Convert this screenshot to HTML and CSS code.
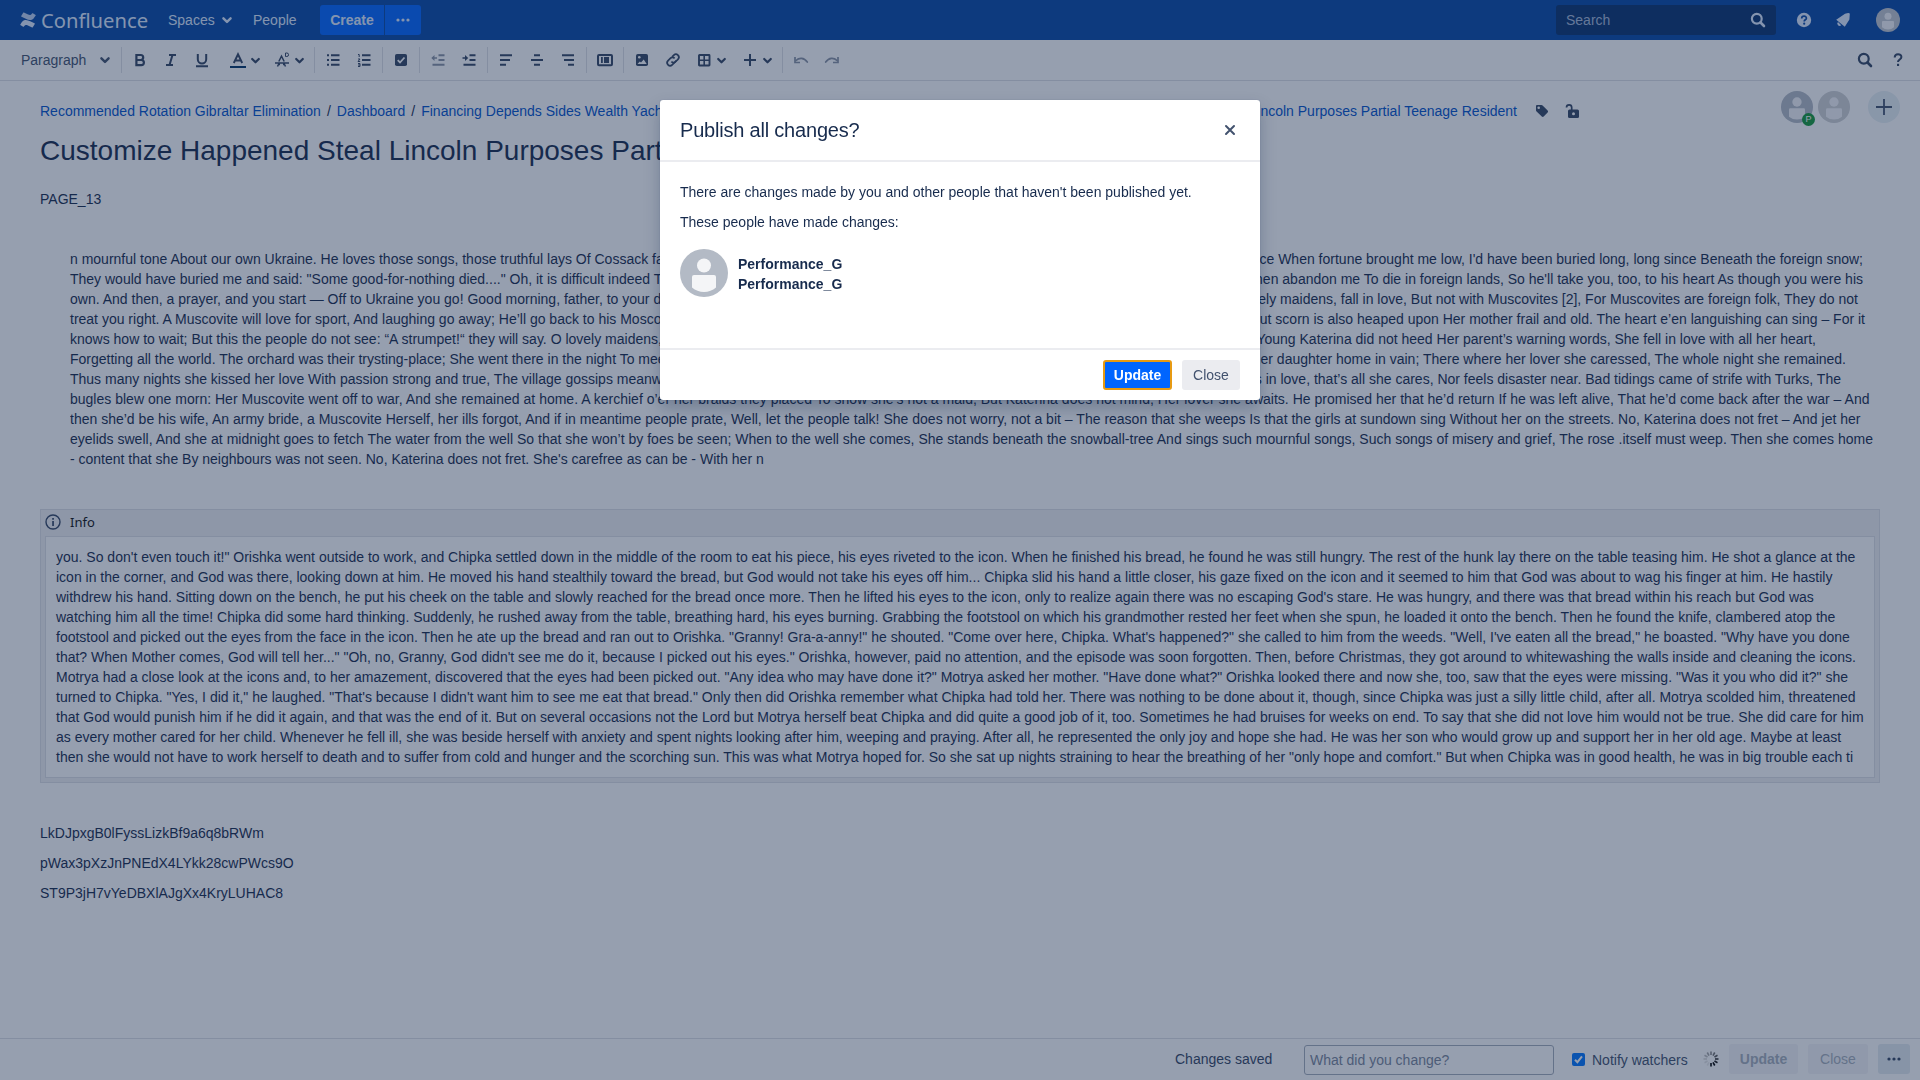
FILE: index.html
```html
<!DOCTYPE html>
<html lang="en">
<head>
<meta charset="utf-8">
<title>Confluence</title>
<link rel="stylesheet" href="styles.css">
</head>
<body>
<svg class="defs" width="0" height="0">
  <symbol id="chev" viewBox="0 0 10 10"><path d="M2 3.6 5 6.6 8 3.6" fill="none" stroke="currentColor" stroke-width="2" stroke-linecap="round" stroke-linejoin="round"/></symbol>
  <symbol id="search" viewBox="0 0 16 16"><circle cx="6.8" cy="6.8" r="4.9" fill="none" stroke="currentColor" stroke-width="2.2"/><path d="M10.5 10.5 14 14" stroke="currentColor" stroke-width="2.6" stroke-linecap="round"/></symbol>
  <symbol id="person" viewBox="0 0 48 48"><circle cx="24" cy="16.5" r="7"/><path d="M12 28a2 2 0 0 1 2-2h20a2 2 0 0 1 2 2v10.5a18.500 18.500 0 0 1-24 0z"/></symbol>
  <symbol id="dots" viewBox="0 0 16 16"><circle cx="3" cy="8" r="1.6"/><circle cx="8" cy="8" r="1.6"/><circle cx="13" cy="8" r="1.6"/></symbol>
</svg>
<div class="page">
  <header class="header">
    <a class="logo">
      <svg width="16" height="16" viewBox="0 0 16 16" fill="#deebff"><path d="M.5 12.200c.5-.8 1.200-1.900 1.900-2.700C4.800 7 7.600 7.900 10.200 9.200l4.300 2c.3.1.4.4.3.7l-2 3.300c-.1.3-.4.4-.7.300l-4.200-2c-2-.9-2.900-.5-3.900 1-.2.3-.5.4-.8.200L.3 13c-.2-.2-.100-.5.2-.8z"/><path d="M15.500 3.800c-.5.8-1.200 1.900-1.900 2.700C11.200 9 8.400 8.100 5.800 6.800l-4.300-2c-.3-.1-.4-.4-.3-.7L3.200.8c.1-.3.4-.4.7-.3l4.200 2c2 .9 2.900.5 3.900-1 .2-.3.5-.4.8-.2L15.700 3c.2.2.100.5-.2.800z" opacity=".85"/></svg>
      <span class="logo-name">Confluence</span>
    </a>
    <a class="nav spaces">Spaces <svg width="12" height="12"><use href="#chev"/></svg></a>
    <a class="nav people">People</a>
    <div class="create"><b>Create</b><span><svg width="16" height="16" fill="currentColor"><use href="#dots"/></svg></span></div>
    <div class="searchbox"><span>Search</span><svg width="16" height="16"><use href="#search"/></svg></div>
    <div class="header-icons">
      <svg width="16" height="16" viewBox="0 0 16 16"><circle cx="8" cy="8" r="7.200" fill="#deebff"/><path d="M5.700 6.400c0-3 4.700-3 4.700-.2 0 1.600-2.200 1.600-2.200 3.200" fill="none" stroke="#0747a6" stroke-width="1.700"/><circle cx="8.200" cy="11.700" r="1.100" fill="#0747a6"/></svg>
      <svg width="16" height="16" viewBox="0 0 16 16" fill="#deebff"><path d="M1.200 7.700 10 1.700Q14.900.2 14.800 2L14.400 7.500 9.800 14.800zM3 10l3.200 3.200A2.200 2.200 0 0 1 3 10z"/></svg>
      <span class="avatar small"><svg width="24" height="24"><use href="#person"/></svg></span>
    </div>
  </header>

  <div class="toolbar">
    <div class="style">Paragraph <svg width="12" height="12"><use href="#chev"/></svg></div>
    <div class="group">
      <i><svg viewBox="0 0 18 18"><path d="M5.400 4h4.300a2.400 2.400 0 0 1 0 5H5.400zM5.400 9h4.900a2.500 2.500 0 0 1 0 5.200H5.400z" fill="none" stroke="currentColor" stroke-width="2.200"/></svg></i>
      <i><svg viewBox="0 0 18 18"><path d="M7 4h7M4 14h7M10.500 4 7.500 14" fill="none" stroke="currentColor" stroke-width="2"/></svg></i>
      <i><svg viewBox="0 0 18 18"><path d="M4.800 3v5.300a4.200 4.200 0 0 0 8.400 0V3M3 15.200h12" fill="none" stroke="currentColor" stroke-width="2"/></svg></i>
      <i class="combo color"><svg viewBox="0 0 18 18"><path d="M4.800 12 9 3.300 13.200 12M6 9.500h6" fill="none" stroke="currentColor" stroke-width="1.900"/><path d="M1 15h16v2H1z" fill="#003366"/></svg><svg class="chev"><use href="#chev"/></svg></i>
      <i class="combo"><svg viewBox="0 0 18 18"><path d="M5.800 10.500 8.500 5.200l2.700 5.300M4.500 15.500l1-2h1.500M12.500 15.500l-1-2H10M2 12h14" fill="none" stroke="currentColor" stroke-width="1.500"/><path d="M12.500 2h1.300a1.700 1.700 0 0 1 0 3.500h-1.300z" fill="none" stroke="currentColor"/></svg><svg class="chev"><use href="#chev"/></svg></i>
    </div>
    <div class="group">
      <i><svg viewBox="0 0 18 18"><path d="M7 4.300h8.500M7 9h8.500M7 13.700h8.500" stroke="currentColor" stroke-width="2"/><path d="M3 4.300h2M3 9h2M3 13.700h2" stroke="currentColor" stroke-width="2"/></svg></i>
      <i><svg viewBox="0 0 18 18"><path d="M7 4.300h8.500M7 9h8.500M7 13.700h8.500" stroke="currentColor" stroke-width="2"/><path d="M3 3.500h1.200V6M3 8h2L3 10.500h2.200M3 12.500h2v3H3M3 14h2" fill="none" stroke="currentColor"/></svg></i>
    </div>
    <div class="group">
      <i><svg viewBox="0 0 18 18"><rect x="3" y="3" width="12" height="12" rx="1.800" fill="currentColor"/><path d="m5.700 9.200 2.300 2.300 4.500-5" fill="none" stroke="#fff" stroke-width="1.800"/></svg></i>
    </div>
    <div class="group">
      <i class="dim"><svg viewBox="0 0 18 18"><path d="M9.500 4.300h6M9.500 9h6M3.500 13.700h12" stroke="currentColor" stroke-width="2"/><path d="M3.500 7H8" stroke="currentColor" stroke-width="1.500"/><path d="M5.500 4v6L2.300 7z" fill="currentColor"/></svg></i>
      <i><svg viewBox="0 0 18 18"><path d="M9.500 4.300h6M9.500 9h6M3.500 13.700h12" stroke="currentColor" stroke-width="2"/><path d="M2.500 7H7" stroke="currentColor" stroke-width="1.500"/><path d="M5 4v6l3.200-3z" fill="currentColor"/></svg></i>
    </div>
    <div class="group">
      <i><svg viewBox="0 0 18 18"><path d="M3 4.300h12M3 9h10M3 13.700h6" stroke="currentColor" stroke-width="2"/></svg></i>
      <i><svg viewBox="0 0 18 18"><path d="M6 4.300h6M3 9h12M6 13.700h6" stroke="currentColor" stroke-width="2"/></svg></i>
      <i><svg viewBox="0 0 18 18"><path d="M3 4.300h12M5 9h10M9 13.700h6" stroke="currentColor" stroke-width="2"/></svg></i>
    </div>
    <div class="group">
      <i><svg viewBox="0 0 18 18"><rect x="2" y="4" width="14" height="10.200" rx="1" fill="none" stroke="currentColor" stroke-width="2"/><path d="M5 6h1.800v6H5zM8 6h5v6H8z" fill="currentColor"/></svg></i>
    </div>
    <div class="group">
      <i><svg viewBox="0 0 18 18"><rect x="3" y="3" width="12" height="12" rx="1.800" fill="currentColor"/><circle cx="6.300" cy="6.300" r="1.300" fill="#fff"/><path d="m4.500 13 2.300-2.500L8 11.500l2.700-3 3 4.500z" fill="#fff"/></svg></i>
      <i><svg viewBox="0 0 18 18"><g fill="none" stroke="currentColor" stroke-width="1.700" transform="rotate(-45 9 9)"><path d="M11 11.800H5a2.900 2.900 0 0 1 0-5.800h3.500a2.900 2.900 0 0 1 2.800 3"/><path d="M9.500 12H13a2.900 2.900 0 0 0 0-5.800h-2.500M6.700 9a2.900 2.900 0 0 0 2.800 3"/></g></svg></i>
      <i class="combo"><svg viewBox="0 0 18 18"><rect x="4" y="4" width="10.500" height="10.500" rx=".5" fill="none" stroke="currentColor" stroke-width="1.900"/><path d="M9.200 4v10M4 9.200h10" stroke="currentColor" stroke-width="1.600"/></svg><svg class="chev"><use href="#chev"/></svg></i>
      <i class="combo"><svg viewBox="0 0 18 18"><path d="M9 3v12M3 9h12" stroke="currentColor" stroke-width="2"/></svg><svg class="chev"><use href="#chev"/></svg></i>
    </div>
    <div class="group">
      <i class="dim"><svg viewBox="0 0 18 18"><path d="M4 9.500c3-3 8-3.300 11.300 1.500" fill="none" stroke="currentColor" stroke-width="1.700" stroke-linecap="round"/><path d="M3 6v5.500h5" fill="none" stroke="currentColor" stroke-width="1.700"/></svg></i>
      <i class="dim"><svg viewBox="0 0 18 18"><path d="M14 9.500c-3-3-8-3.300-11.300 1.500" fill="none" stroke="currentColor" stroke-width="1.700" stroke-linecap="round"/><path d="M15 6v5.500h-5" fill="none" stroke="currentColor" stroke-width="1.700"/></svg></i>
    </div>
    <div class="toolbar-end">
      <svg width="16" height="16"><use href="#search"/></svg>
      <svg width="12" height="16" viewBox="0 0 12 16"><path d="M2.700 5.500C2.700 1.200 9.400 1.300 9.400 5c0 2.500-3.400 2.400-3.400 5" fill="none" stroke="currentColor" stroke-width="2"/><rect x="5" y="11.800" width="2.100" height="2.200" fill="currentColor"/></svg>
    </div>
  </div>

  <main class="content">
    <div class="top">
      <div class="crumbs">
        <span class="crumb-left"><a>Recommended Rotation Gibraltar Elimination</a><em>/</em><a>Dashboard</a><em>/</em><a>Financing Depends Sides Wealth Yachts</a></span>
        <a>Steal Lincoln Purposes Partial Teenage Resident</a>
      </div>
      <div class="crumb-icons">
        <svg width="16" height="16" viewBox="0 0 16 16"><path d="M2 3.200C2 2.400 2.500 2 3.200 2h4.200c.5 0 .9.200 1.200.500l5 5c.6.600.6 1.300 0 1.900l-3.900 4.100c-.6.600-1.300.600-1.900 0L2.600 8.500C2.200 8.100 2 7.700 2 7.200z" fill="currentColor"/><circle cx="4.700" cy="4.700" r="1.300" fill="#fff"/></svg>
        <svg width="16" height="16" viewBox="0 0 16 16"><rect x="4" y="6.500" width="11" height="8.500" rx="1.500" fill="currentColor"/><path d="M2.500 4.500c0-3.500 5.200-3.500 5.200 0v3" fill="none" stroke="currentColor" stroke-width="1.700"/><circle cx="9.500" cy="10.700" r="1.500" fill="#fff"/></svg>
      </div>
      <div class="people-row">
        <span class="avatar"><svg width="32" height="32"><use href="#person"/></svg><span class="badge">P</span></span>
        <span class="avatar gray"><svg width="32" height="32"><use href="#person"/></svg></span>
        <span class="invite"><svg width="16" height="16" viewBox="0 0 16 16"><path d="M8 0v16M0 8h16" stroke="#42526e" stroke-width="1.800"/></svg></span>
      </div>
    </div>
    <h1>Customize Happened Steal Lincoln Purposes Partial Teenage Resident</h1>
    <p class="tag">PAGE_13</p>
    <div class="story">
      <div style="width:1793px"><span>n mournful tone About our own Ukraine. He loves those songs, those truthful lays Of Cossack fame</span><span>since When fortune brought me low, I'd have been buried long, long since Beneath the foreign snow;</span></div>
      <div style="width:1793px"><span>They would have buried me and said: "Some good-for-nothing died...." Oh, it is difficult indeed To</span><span>then abandon me To die in foreign lands, So he'll take you, too, to his heart As though you were his</span></div>
      <div style="width:1788px"><span>own. And then, a prayer, and you start — Off to Ukraine you go! Good morning, father, to your door</span><span>lovely maidens, fall in love, But not with Muscovites [2], For Muscovites are foreign folk, They do not</span></div>
      <div style="width:1795px"><span>treat you right. A Muscovite will love for sport, And laughing go away; He’ll go back to his Moscow</span><span>But scorn is also heaped upon Her mother frail and old. The heart e’en languishing can sing – For it</span></div>
      <div style="width:1746px"><span>knows how to wait; But this the people do not see: “A strumpet!“ they will say. O lovely maidens,</span><span>Young Katerina did not heed Her parent’s warning words, She fell in love with all her heart,</span></div>
      <div style="width:1776px"><span>Forgetting all the world. The orchard was their trysting-place; She went there in the night To meet</span><span>her daughter home in vain; There where her lover she caressed, The whole night she remained.</span></div>
      <div style="width:1771px"><span>Thus many nights she kissed her love With passion strong and true, The village gossips meanwhile</span><span>is in love, that’s all she cares, Nor feels disaster near. Bad tidings came of strife with Turks, The</span></div>
      <p style="width:1799.500px">bugles blew one morn: Her Muscovite went off to war, And she remained at home. A kerchief o’er her braids they placed To show she’s not a maid, But Katerina does not mind, Her lover she awaits. He promised her that he’d return If he was left alive, That he’d come back after the war – And</p>
      <p style="width:1790.500px">then she’d be his wife, An army bride, a Muscovite Herself, her ills forgot, And if in meantime people prate, Well, let the people talk! She does not worry, not a bit – The reason that she weeps Is that the girls at sundown sing Without her on the streets. No, Katerina does not fret – And jet her</p>
      <p style="width:1803px">eyelids swell, And she at midnight goes to fetch The water from the well So that she won’t by foes be seen; When to the well she comes, She stands beneath the snowball-tree And sings such mournful songs, Such songs of misery and grief, The rose .itself must weep. Then she comes home</p>
      <div>- content that she By neighbours was not seen. No, Katerina does not fret. She's carefree as can be - With her n</div>
    </div>
    <section class="info">
      <div class="info-title"><svg width="16" height="16" viewBox="0 0 16 16"><circle cx="8" cy="8" r="7" fill="none" stroke="#344563" stroke-width="1.400"/><path d="M7.200 7h1.700v5H7.200zM7.200 4h1.700v1.700H7.200z" fill="#344563"/></svg>Info</div>
      <div class="info-body">
        <div>you. So don't even touch it!" Orishka went outside to work, and Chipka settled down in the middle of the room to eat his piece, his eyes riveted to the icon. When he finished his bread, he found he was still hungry. The rest of the hunk lay there on the table teasing him. He shot a glance at the</div>
        <div>icon in the corner, and God was there, looking down at him. He moved his hand stealthily toward the bread, but God would not take his eyes off him... Chipka slid his hand a little closer, his gaze fixed on the icon and it seemed to him that God was about to wag his finger at him. He hastily</div>
        <div>withdrew his hand. Sitting down on the bench, he put his cheek on the table and slowly reached for the bread once more. Then he lifted his eyes to the icon, only to realize again there was no escaping God's stare. He was hungry, and there was that bread within his reach but God was</div>
        <div>watching him all the time! Chipka did some hard thinking. Suddenly, he rushed away from the table, breathing hard, his eyes burning. Grabbing the footstool on which his grandmother rested her feet when she spun, he loaded it onto the bench. Then he found the knife, clambered atop the</div>
        <div>footstool and picked out the eyes from the face in the icon. Then he ate up the bread and ran out to Orishka. "Granny! Gra-a-anny!" he shouted. "Come over here, Chipka. What's happened?" she called to him from the weeds. "Well, I've eaten all the bread," he boasted. "Why have you done</div>
        <div>that? When Mother comes, God will tell her..." "Oh, no, Granny, God didn't see me do it, because I picked out his eyes." Orishka, however, paid no attention, and the episode was soon forgotten. Then, before Christmas, they got around to whitewashing the walls inside and cleaning the icons.</div>
        <div>Motrya had a close look at the icons and, to her amazement, discovered that the eyes had been picked out. "Any idea who may have done it?" Motrya asked her mother. "Have done what?" Orishka looked there and now she, too, saw that the eyes were missing. "Was it you who did it?" she</div>
        <div>turned to Chipka. "Yes, I did it," he laughed. "That's because I didn't want him to see me eat that bread." Only then did Orishka remember what Chipka had told her. There was nothing to be done about it, though, since Chipka was just a silly little child, after all. Motrya scolded him, threatened</div>
        <div>that God would punish him if he did it again, and that was the end of it. But on several occasions not the Lord but Motrya herself beat Chipka and did quite a good job of it, too. Sometimes he had bruises for weeks on end. To say that she did not love him would not be true. She did care for him</div>
        <div>as every mother cared for her child. Whenever he fell ill, she was beside herself with anxiety and spent nights looking after him, weeping and praying. After all, he represented the only joy and hope she had. He was her son who would grow up and support her in her old age. Maybe at least</div>
        <div>then she would not have to work herself to death and to suffer from cold and hunger and the scorching sun. This was what Motrya hoped for. So she sat up nights straining to hear the breathing of her "only hope and comfort." But when Chipka was in good health, he was in big trouble each ti</div>
      </div>
    </section>
    <div class="codes"><p>LkDJpxgB0lFyssLizkBf9a6q8bRWm</p><p>pWax3pXzJnPNEdX4LYkk28cwPWcs9O</p><p>ST9P3jH7vYeDBXlAJgXx4KryLUHAC8</p></div>
  </main>

  <footer class="footer">
    <span class="saved">Changes saved</span>
    <div class="comment">What did you change?</div>
    <span class="check"><svg width="13" height="13" viewBox="0 0 13 13"><path d="m3 6.700 2.400 2.500L10 3.300" fill="none" stroke="#fff" stroke-width="2"/></svg></span>
    <span class="notify">Notify watchers</span>
    <svg class="spinner" width="16" height="16" viewBox="-8 -8 16 16" stroke="#000" stroke-width="1.600"><path d="M0-4v-3.500" opacity=".45"/><path d="M0-4v-3.500" transform="rotate(30)" opacity=".55"/><path d="M0-4v-3.500" transform="rotate(60)" opacity=".65"/><path d="M0-4v-3.500" transform="rotate(90)" opacity=".8"/><path d="M0-4v-3.500" transform="rotate(120)" opacity=".9"/><path d="M0-4v-3.500" transform="rotate(150)"/><path d="M0-4v-3.500" transform="rotate(180)"/><path d="M0-4v-3.500" transform="rotate(210)" opacity=".08"/><path d="M0-4v-3.500" transform="rotate(240)" opacity=".1"/><path d="M0-4v-3.500" transform="rotate(270)" opacity=".15"/><path d="M0-4v-3.500" transform="rotate(300)" opacity=".25"/><path d="M0-4v-3.500" transform="rotate(330)" opacity=".35"/></svg>
    <span class="btn off bold w69">Update</span>
    <span class="btn off w60">Close</span>
    <span class="btn more"><svg width="16" height="16" fill="currentColor"><use href="#dots"/></svg></span>
  </footer>
</div>

<div class="blanket">
  <div class="dialog">
    <div class="dialog-head"><h2>Publish all changes?</h2><svg width="12" height="12" viewBox="0 0 12 12"><path d="m2 2 8 8M10 2l-8 8" stroke="#42526e" stroke-width="2" stroke-linecap="round"/></svg></div>
    <div class="dialog-body">
      <p>There are changes made by you and other people that haven't been published yet.</p>
      <p>These people have made changes:</p>
      <div class="person"><span class="avatar big"><svg width="48" height="48"><use href="#person"/></svg></span><div>Performance_G<br>Performance_G</div></div>
    </div>
    <div class="dialog-foot"><span class="btn primary">Update</span><span class="btn plain">Close</span></div>
  </div>
</div>
</body>
</html>
```
FILE: styles.css
```css
* { box-sizing: border-box; }
body { margin: 0; font: 14px/20px "Liberation Sans", Arial, sans-serif; color: #172b4d; background: #fff; overflow: hidden; }
h1, h2, p { margin: 0; font-weight: 400; }
svg { display: block; flex: none; }
i, em { font-style: normal; }
.defs { position: absolute; }
.page { width: 1920px; height: 1080px; display: flex; flex-direction: column; }

.header { height: 40px; flex: none; background: #0747a6; color: #deebff; display: flex; align-items: center; padding-left: 20px; }
.logo { display: flex; align-items: center; gap: 5px; width: 148px; }
.logo-name { font: 20.200px/30px "Noto Sans", sans-serif; padding-bottom: 1px; }
.nav { display: flex; align-items: center; }
.spaces { width: 85px; gap: 6px; }
.people { width: 67px; }
.create { display: flex; height: 30px; gap: 1px; line-height: 30px; text-align: center; }
.create b { width: 64px; background: #0065ff; border-radius: 3px 0 0 3px; }
.create span { width: 36px; background: #0065ff; border-radius: 0 3px 3px 0; display: flex; align-items: center; justify-content: center; }
.searchbox { margin-left: auto; width: 220px; height: 30px; border-radius: 3px; background: #08326f; display: flex; align-items: center; justify-content: space-between; padding: 0 10px; }
.searchbox span { color: #a5b8d8; }
.header-icons { display: flex; align-items: center; width: 144px; padding-left: 20px; gap: 23px; }
.header-icons .avatar { margin-left: 2px; }

.avatar { position: relative; width: 32px; height: 32px; border-radius: 50%; background: #b3bac5; fill: #f4f5f7; flex: none; }
.avatar svg { border-radius: 50%; }
.avatar.small { width: 24px; height: 24px; background: #c1c7d0; }
.avatar.gray { background: #cfd1d4; fill: #f4f5f7; }
.avatar.big { width: 48px; height: 48px; }
.badge { position: absolute; right: -2px; bottom: -3px; width: 13px; height: 13px; border-radius: 50%; background: #149a3a; color: #fff; font: 9px/13px "Liberation Sans", sans-serif; text-align: center; }

.toolbar { height: 41px; flex: none; border-bottom: 1px solid #dfe1e6; color: #344563; display: flex; align-items: center; padding-left: 21px; }
.style { width: 100px; display: flex; align-items: center; justify-content: space-between; padding-right: 10px; color: #42526e; }
.group { height: 26px; border-left: 1px solid #dfe1e6; padding: 0 2.5px; display: flex; align-items: center; }
.group i { width: 31px; display: flex; justify-content: center; }
.group i svg { width: 18px; height: 18px; }
.group i svg.chev { width: 11px; height: 11px; margin-top: 4px; }
.group i.combo { width: 45.500px; justify-content: flex-start; padding-left: 6.500px; gap: 3px; }
.group i.color { width: 48.500px; padding-left: 11.500px; }
.group i.dim { color: #8993a4; }
.toolbar-end { margin-left: auto; display: flex; gap: 19px; padding-right: 16px; }

.content { flex: 1; padding: 10px 20px 0 40px; white-space: nowrap; }
.top { display: flex; height: 40px; }
.crumbs { width: 1477px; display: flex; justify-content: space-between; padding-top: 10px; color: #0052cc; }
.crumbs em { color: #172b4d; padding: 0 6px; }
.crumb-icons { display: flex; gap: 14px; padding: 12px 0 0 17px; color: #344563; }
.people-row { margin-left: auto; display: flex; gap: 5px; }
.invite { width: 32px; height: 32px; margin-left: 13px; border-radius: 50%; background: #e8f0f5; display: flex; align-items: center; justify-content: center; }
h1 { font-size: 28px; line-height: 40px; }
.tag { padding-top: 18px; }
.story { padding: 40px 0 0 30px; }
.story div { display: flex; justify-content: space-between; width: max-content; }
.story p { text-align: justify; text-align-last: justify; white-space: normal; height: 20px; overflow: hidden; }
.info { width: 1840px; height: 274px; margin-top: 40px; border: 1px solid #dfe1e6; background: #f0f1f3; padding: 0 4px; }
.info-title { height: 26px; display: flex; align-items: center; gap: 9px; font: 13px/24px "Noto Sans", sans-serif; color: #111; padding-bottom: 2px; }
.info-body { height: 242px; border: 1px solid #dfe1e6; background: #fff; padding: 10px; }
.codes { padding-top: 40px; display: grid; gap: 10px; }

.footer { height: 42px; flex: none; border-top: 1px solid #dfe1e6; display: flex; align-items: center; padding: 0 0 1px 1175px; color: #42526e; }
.saved { width: 129px; color: #344563; padding-bottom: 1px; }
.comment { width: 250px; height: 30px; margin-top: 2px; border: 1px solid #a5adba; border-radius: 3px; padding: 4px 5px; color: #7a869a; }
.check { width: 13px; height: 13px; margin: 0 7px 0 18px; border-radius: 2px; background: #0075ff; }
.notify { width: 111px; padding-top: 2px; }
.spinner { margin-right: 10px; }
.btn { height: 30px; line-height: 30px; border-radius: 3px; text-align: center; }
.off { background: #f4f5f8; color: #a5adba; margin-right: 10px; }
.bold { font-weight: 700; }
.w69 { width: 69px; }
.w60 { width: 60px; }
.more { width: 32px; background: #e4ebf1; color: #344563; display: flex; align-items: center; justify-content: center; }

.blanket { position: fixed; inset: 0; background: rgba(23, 43, 77, .45); display: flex; justify-content: center; align-items: flex-start; padding-top: 100px; }
.dialog { width: 600px; height: 300px; border-radius: 3px; background: #fff; box-shadow: 0 0 1px rgba(9, 30, 66, .31), 0 8px 16px rgba(9, 30, 66, .25); display: flex; flex-direction: column; }
.dialog-head { height: 62px; border-bottom: 2px solid #ebecf0; padding: 0 24px 0 20px; display: flex; align-items: center; justify-content: space-between; }
h2 { font-size: 20px; line-height: 24px; letter-spacing: -.01em; }
.dialog-body { flex: 1; padding: 20px; display: flex; flex-direction: column; gap: 10px; }
.person { display: flex; gap: 10px; padding-top: 7px; font-weight: 700; }
.person div { padding-top: 5px; }
.dialog-foot { height: 52px; border-top: 2px solid #ebecf0; padding: 10px 20px; display: flex; justify-content: flex-end; gap: 10px; }
.primary { width: 69px; line-height: 26px; border: 2px solid #e79a12; background: #0065ff; color: #fff; font-weight: 700; }
.plain { width: 58px; background: #ebecf0; color: #42526e; }
```
